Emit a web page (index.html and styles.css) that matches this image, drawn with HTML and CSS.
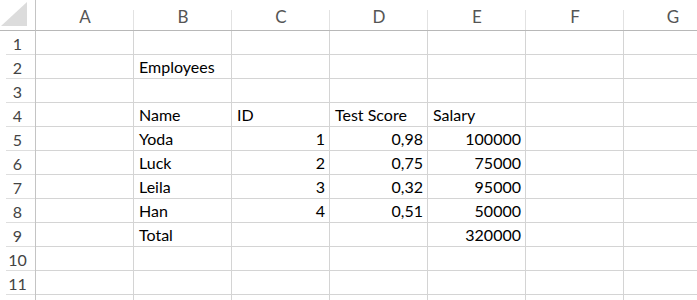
FILE: index.html
```html
<!DOCTYPE html>
<html>
<head>
<meta charset="utf-8">
<link rel="stylesheet" href="styles.css">
</head>
<body>
<div class="sheet">
  <div class="corner"><svg width="28" height="26" viewBox="0 0 28 26"><polygon points="27,1 27,25 1,25" fill="#dcdcdc"/></svg></div>
  <div class="ch">A</div><div class="ch">B</div><div class="ch">C</div><div class="ch">D</div><div class="ch">E</div><div class="ch">F</div><div class="ch">G</div>

  <div class="rh">1</div><div class="c"></div><div class="c"></div><div class="c"></div><div class="c"></div><div class="c"></div><div class="c"></div><div class="c"></div>
  <div class="rh">2</div><div class="c"></div><div class="c">Employees</div><div class="c"></div><div class="c"></div><div class="c"></div><div class="c"></div><div class="c"></div>
  <div class="rh">3</div><div class="c"></div><div class="c"></div><div class="c"></div><div class="c"></div><div class="c"></div><div class="c"></div><div class="c"></div>
  <div class="rh">4</div><div class="c"></div><div class="c">Name</div><div class="c">ID</div><div class="c">Test Score</div><div class="c">Salary</div><div class="c"></div><div class="c"></div>
  <div class="rh">5</div><div class="c"></div><div class="c">Yoda</div><div class="c n">1</div><div class="c n">0,98</div><div class="c n">100000</div><div class="c"></div><div class="c"></div>
  <div class="rh">6</div><div class="c"></div><div class="c">Luck</div><div class="c n">2</div><div class="c n">0,75</div><div class="c n">75000</div><div class="c"></div><div class="c"></div>
  <div class="rh">7</div><div class="c"></div><div class="c">Leila</div><div class="c n">3</div><div class="c n">0,32</div><div class="c n">95000</div><div class="c"></div><div class="c"></div>
  <div class="rh">8</div><div class="c"></div><div class="c">Han</div><div class="c n">4</div><div class="c n">0,51</div><div class="c n">50000</div><div class="c"></div><div class="c"></div>
  <div class="rh">9</div><div class="c"></div><div class="c">Total</div><div class="c"></div><div class="c"></div><div class="c n">320000</div><div class="c"></div><div class="c"></div>
  <div class="rh">10</div><div class="c"></div><div class="c"></div><div class="c"></div><div class="c"></div><div class="c"></div><div class="c"></div><div class="c"></div>
  <div class="rh">11</div><div class="c"></div><div class="c"></div><div class="c"></div><div class="c"></div><div class="c"></div><div class="c"></div><div class="c"></div>
  <div class="rh"></div><div class="c"></div><div class="c"></div><div class="c"></div><div class="c"></div><div class="c"></div><div class="c"></div><div class="c"></div>
</div>
</body>
</html>
```
FILE: styles.css
```css
html, body {
  margin: 0;
  padding: 0;
  background: #fff;
  overflow: hidden;
}
.sheet {
  display: grid;
  grid-template-columns: 36px repeat(7, 98px);
  grid-template-rows: 31px;
  grid-auto-rows: 24px;
  height: 300px;
  overflow: hidden;
  font-family: Lato, "Open Sans", sans-serif;
}
.sheet > div {
  box-sizing: border-box;
}
.corner {
  border-right: 1px solid #c4c4c4;
  border-bottom: 1px solid #b8b8b8;
  display: flex;
  align-items: flex-end;
  justify-content: flex-end;
  padding: 0 7px 3px 0;
}
.corner svg {
  display: block;
}
.ch {
  border-bottom: 1px solid #b8b8b8;
  background: linear-gradient(#e2e2e2, #e2e2e2) right bottom / 1px 20px no-repeat;
  color: #555;
  font-size: 17px;
  display: flex;
  align-items: center;
  justify-content: center;
  padding-top: 2px;
}
.rh {
  border-right: 1px solid #c4c4c4;
  background: linear-gradient(#dedede, #dedede) right bottom / 29px 1px no-repeat;
  color: #444;
  font-size: 16px;
  display: flex;
  align-items: center;
  justify-content: center;
  padding-top: 1px;
}
.c {
  border-right: 1px solid #d4d4d4;
  border-bottom: 1px solid #d4d4d4;
  font-size: 16px;
  color: #000;
  display: flex;
  align-items: flex-end;
  padding: 0 4px 2px 5px;
  white-space: nowrap;
}
.n {
  justify-content: flex-end;
}
```
